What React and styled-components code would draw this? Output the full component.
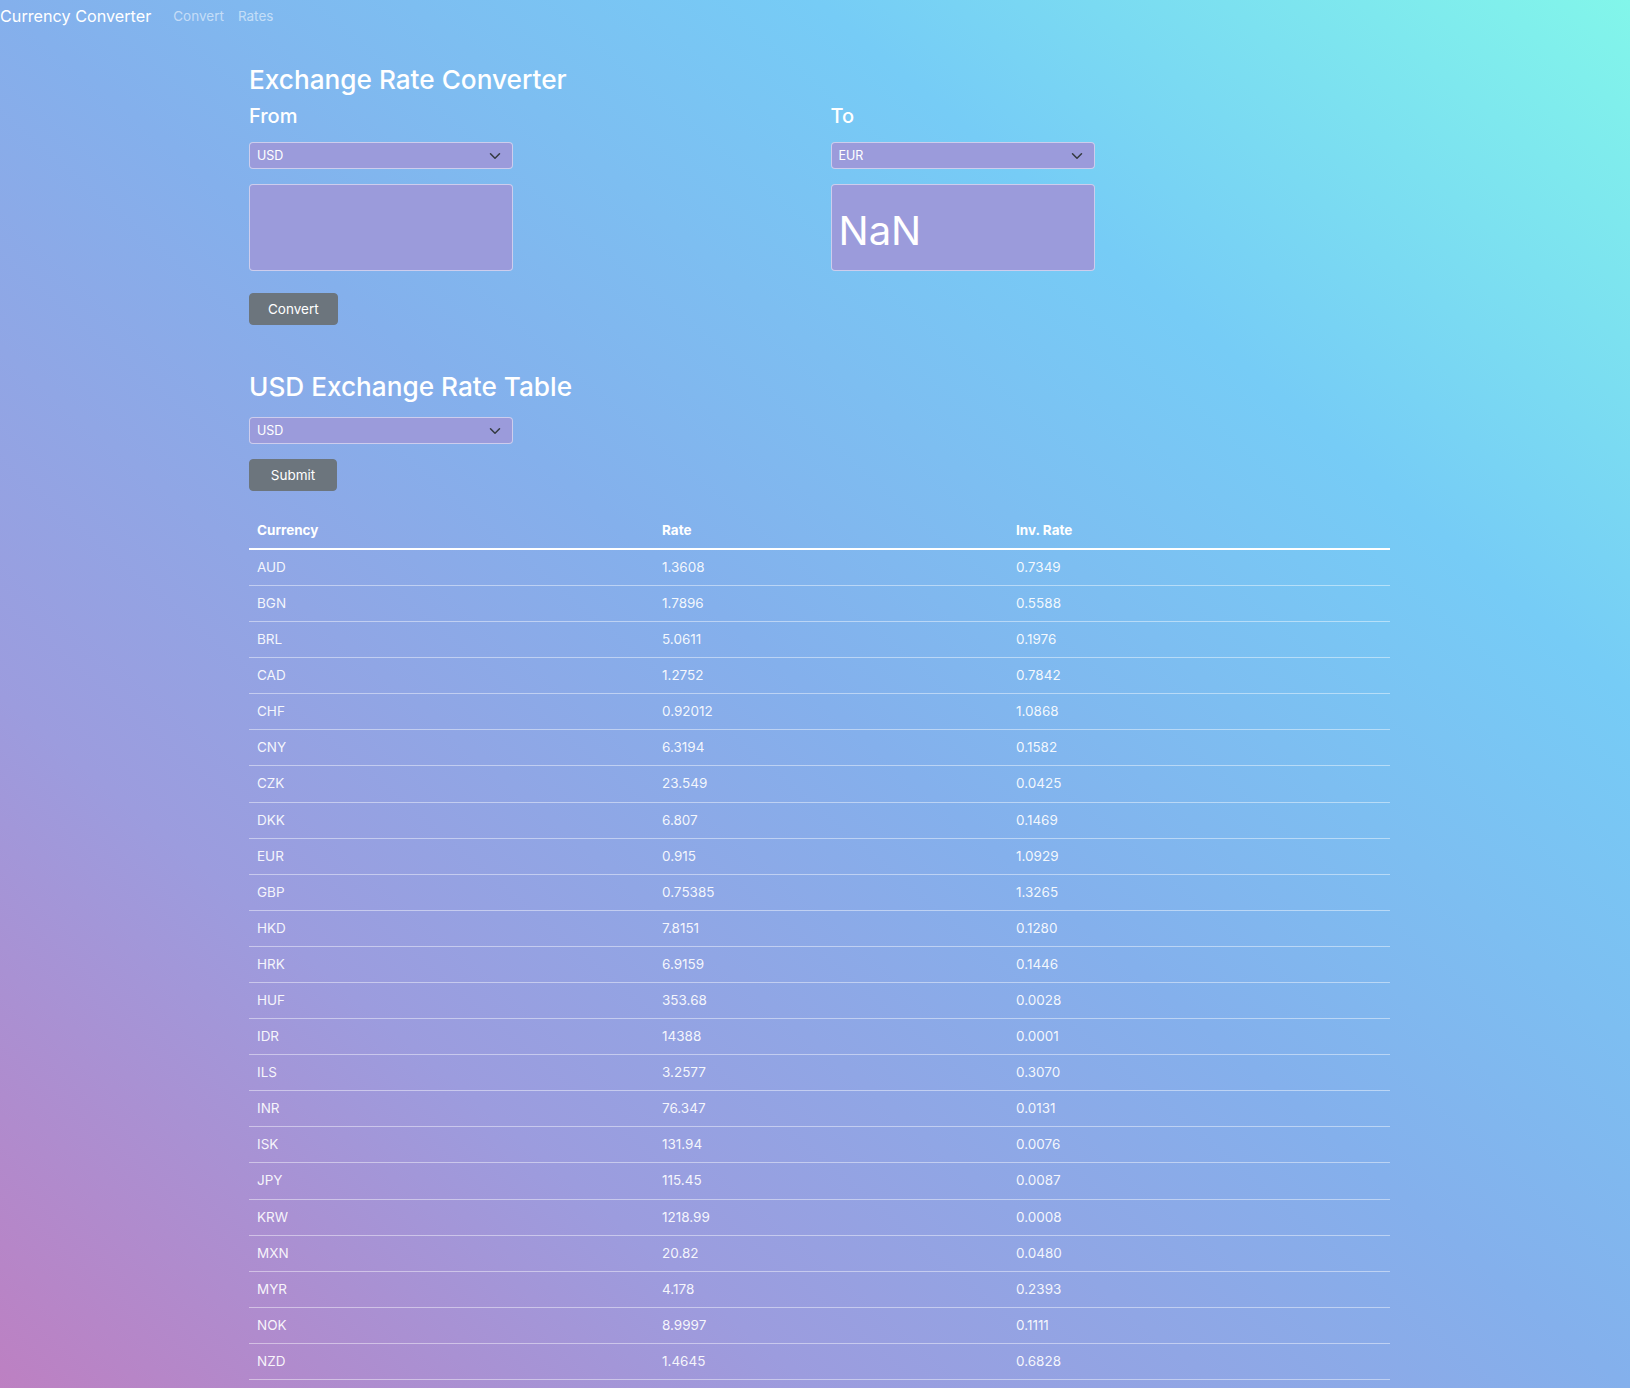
import React, { useState } from 'react';
import styled, { createGlobalStyle } from 'styled-components';

const GlobalStyle = createGlobalStyle`
  html, body {
    margin: 0;
    padding: 0;
  }
  body {
    min-height: 100vh;
    font-family: Inter, "Noto Sans", "Liberation Sans", sans-serif;
    color: #fff;
    background: linear-gradient(to top right, #bd80c2 0%, #9c9cde 25%, #84b0ec 50%, #76ccf6 75%, #82f6ea 100%);
    background-attachment: fixed;
  }
`;

const rates = [
  ['AUD', '1.3608'],
  ['BGN', '1.7896'],
  ['BRL', '5.0611'],
  ['CAD', '1.2752'],
  ['CHF', '0.92012'],
  ['CNY', '6.3194'],
  ['CZK', '23.549'],
  ['DKK', '6.807'],
  ['EUR', '0.915'],
  ['GBP', '0.75385'],
  ['HKD', '7.8151'],
  ['HRK', '6.9159'],
  ['HUF', '353.68'],
  ['IDR', '14388'],
  ['ILS', '3.2577'],
  ['INR', '76.347'],
  ['ISK', '131.94'],
  ['JPY', '115.45'],
  ['KRW', '1218.99'],
  ['MXN', '20.82'],
  ['MYR', '4.178'],
  ['NOK', '8.9997'],
  ['NZD', '1.4645'],
];

const codes = ['USD', 'EUR', 'GBP', 'JPY', 'AUD', 'CAD'];

const App = () => {
  const [from, setFrom] = useState('USD');
  const [to, setTo] = useState('EUR');
  const [base, setBase] = useState('USD');

  return (
    <>
      <GlobalStyle />
      <Navbar>
        <Brand>Currency Converter</Brand>
        <NavLinks>
          <NavLink>Convert</NavLink>
          <NavLink>Rates</NavLink>
        </NavLinks>
      </Navbar>

      <Main>
        <Title>Exchange Rate Converter</Title>
        <Columns>
          <Column>
            <Label>From</Label>
            <CurrencySelect value={from} onChange={setFrom} />
            <AmountBox />
          </Column>
          <Column>
            <Label>To</Label>
            <CurrencySelect value={to} onChange={setTo} />
            <AmountBox as="div">NaN</AmountBox>
          </Column>
        </Columns>
        <Button $top={22}>Convert</Button>

        <Title $gap>{base} Exchange Rate Table</Title>
        <CurrencySelect value={base} onChange={setBase} />
        <Button>Submit</Button>

        <Table>
          <colgroup>
            <col style={{ width: 405 }} />
            <col style={{ width: 354 }} />
            <col />
          </colgroup>
          <thead>
            <tr>
              <Th>Currency</Th>
              <Th>Rate</Th>
              <Th>Inv. Rate</Th>
            </tr>
          </thead>
          <tbody>
            {rates.map(([code, rate]) => (
              <tr key={code}>
                <Td>{code}</Td>
                <Td>{rate}</Td>
                <Td>{(1 / parseFloat(rate)).toFixed(4)}</Td>
              </tr>
            ))}
          </tbody>
        </Table>
      </Main>
    </>
  );
};

const CurrencySelect = ({ value, onChange }) => (
  <SelectWrap>
    <Select value={value} onChange={(e) => onChange(e.target.value)}>
      {codes.map((c) => (
        <option key={c}>{c}</option>
      ))}
    </Select>
    <Chevron viewBox="0 0 16 16">
      <path d="M2 5l6 6 6-6" fill="none" stroke="#343a40" strokeWidth="2" strokeLinecap="round" strokeLinejoin="round" />
    </Chevron>
  </SelectWrap>
);

export default App;

const Navbar = styled.nav`
  display: flex;
  align-items: center;
  height: 32px;
`;

const Brand = styled.span`
  font-size: 16.2px;
  color: #fff;
  margin-right: 22px;
`;

const NavLinks = styled.div`
  display: flex;
  gap: 14px;
`;

const NavLink = styled.span`
  font-size: 13.5px;
  color: rgba(255, 255, 255, 0.55);
  cursor: pointer;
  :hover {
    color: rgba(255, 255, 255, 0.8);
  }
`;

const Main = styled.main`
  width: 1141px;
  margin-left: 249px;
  padding-top: 32px;
  display: flex;
  flex-direction: column;
  align-items: flex-start;
`;

const Title = styled.h3`
  font-size: 26.2px;
  font-weight: 500;
  line-height: 1.2;
  margin: ${(p) => (p.$gap ? '46px' : '0')} 0 14px;
`;

const Columns = styled.div`
  display: grid;
  grid-template-columns: 1fr 1fr;
  column-gap: 22px;
  width: 100%;
  margin-top: -5px;
`;

const Column = styled.div`
  display: flex;
  flex-direction: column;
`;

const Label = styled.h5`
  font-size: 20px;
  font-weight: 500;
  line-height: 1.2;
  margin: 0 0 14px;
`;

const SelectWrap = styled.div`
  position: relative;
  width: 264px;
  margin-bottom: 15px;
`;

const Select = styled.select`
  appearance: none;
  box-sizing: border-box;
  width: 100%;
  height: 27px;
  padding: 0 30px 0 7px;
  font-family: Inter, "Noto Sans", sans-serif;
  font-size: 12.5px;
  color: #fff;
  background: #9b9bdb;
  border: 1px solid rgba(255, 255, 255, 0.5);
  border-radius: 4px;
  outline: none;
`;

const Chevron = styled.svg`
  position: absolute;
  right: 12px;
  top: 8px;
  width: 12px;
  height: 12px;
  pointer-events: none;
`;

const AmountBox = styled.input`
  box-sizing: border-box;
  width: 264px;
  height: 87px;
  padding: 6px 7px 0;
  display: flex;
  align-items: center;
  font-family: Inter, "Noto Sans", sans-serif;
  font-size: 40px;
  color: #fff;
  background: #9b9bdb;
  border: 1px solid rgba(255, 255, 255, 0.5);
  border-radius: 4px;
  outline: none;
`;

const Button = styled.button`
  margin-top: ${(p) => p.$top || 0}px;
  min-width: 88px;
  height: 32px;
  padding: 0 18px;
  font-family: Inter, "Noto Sans", sans-serif;
  font-size: 13.5px;
  color: #fff;
  background: #6c757d;
  border: 1px solid #6c757d;
  border-radius: 4px;
  cursor: pointer;
`;

const Table = styled.table`
  width: 100%;
  table-layout: fixed;
  margin-top: 21px;
  border-collapse: collapse;
  font-size: 13.5px;
`;

const Th = styled.th`
  text-align: left;
  font-weight: 700;
  padding: 8px 8px;
  line-height: 20px;
  border-bottom: 2px solid #fff;
`;

const Td = styled.td`
  padding: 8px 8px;
  line-height: 19.1px;
  color: rgba(255, 255, 255, 0.92);
  border-bottom: 1px solid rgba(255, 255, 255, 0.45);
`;
